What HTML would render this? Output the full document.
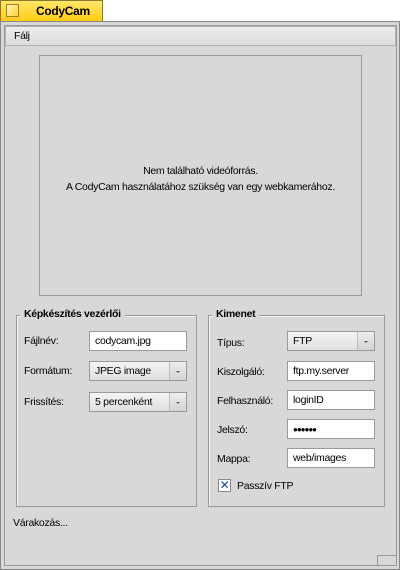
<!DOCTYPE html>
<html><head><style>
*{box-sizing:border-box}
body{margin:0;width:400px;height:570px;background:#fff;position:relative;overflow:hidden;font-family:"Liberation Sans","DejaVu Sans",sans-serif;font-size:10.5px;letter-spacing:-0.3px;color:#000}
.a{position:absolute}
.tab{left:0;top:0;width:103px;height:22px;background:linear-gradient(#ffe66a,#ffcb10);border:1px solid #8a7a30;border-bottom:none}
.win{left:0;top:21px;width:400px;height:549px;background:#d8d8d8;border:1px solid #888}
.field{background:#fff;border:1px solid #999;height:20px;padding:3px 0 0 5px}
.menu{background:linear-gradient(#ececec,#dcdcdc);border:1px solid #b0b0b0;height:20px;padding:3px 0 0 8px}
.dd{background:linear-gradient(#f4f4f4,#e0e0e0);border:1px solid #999;height:20px;padding:3px 0 0 5px}
.dd::after{content:"";position:absolute;right:0;top:0;width:16px;height:18px;border-left:1px solid #bbb;background:linear-gradient(#eee,#d4d4d4)}
.dd i{position:absolute;right:6px;top:9px;width:0;height:0;border-left:2px solid transparent;border-right:2px solid transparent;border-top:2px solid #555;z-index:2}
.box{border:1px solid #999;box-shadow:1px 1px 0 #f4f4f4 inset}
.bt{background:#d8d8d8;font-weight:bold;padding:0 4px}
</style></head><body>
<div class="a tab"></div>
<div class="a" style="left:6px;top:4px;width:13px;height:13px;border:1px solid #9a8020;background:linear-gradient(135deg,#fff6c0,#ffd030)"></div>
<div class="a" style="left:36px;top:4px;font-weight:bold;font-size:12px">CodyCam</div>
<div class="a win"></div>
<div class="a" style="left:4px;top:25px;width:393px;height:541px;border:1px solid #999;background:#d8d8d8"></div>
<div class="a menu" style="left:5px;top:26px;width:391px">Fálj</div>
<div class="a" style="left:39px;top:55px;width:323px;height:241px;border:1px solid #999"></div>
<div class="a" style="left:39px;top:163px;width:323px;text-align:center;line-height:16px">Nem található videóforrás.<br>A CodyCam használatához szükség van egy webkamerához.</div>

<div class="a box" style="left:16px;top:315px;width:181px;height:192px"></div>
<div class="a bt" style="left:20px;top:308px">Képkészítés vezérlői</div>
<div class="a" style="left:24px;top:335px">Fájlnév:</div>
<div class="a field" style="left:89px;top:331px;width:98px">codycam.jpg</div>
<div class="a" style="left:24px;top:365px">Formátum:</div>
<div class="a dd" style="left:89px;top:361px;width:98px">JPEG image<i></i></div>
<div class="a" style="left:24px;top:396px">Frissítés:</div>
<div class="a dd" style="left:89px;top:392px;width:98px">5 percenként<i></i></div>

<div class="a box" style="left:208px;top:315px;width:177px;height:192px"></div>
<div class="a bt" style="left:212px;top:308px">Kimenet</div>
<div class="a" style="left:217px;top:337px">Típus:</div>
<div class="a dd" style="left:287px;top:331px;width:88px">FTP<i></i></div>
<div class="a" style="left:217px;top:366px">Kiszolgáló:</div>
<div class="a field" style="left:287px;top:361px;width:88px">ftp.my.server</div>
<div class="a" style="left:217px;top:395px">Felhasználó:</div>
<div class="a field" style="left:287px;top:390px;width:88px">loginID</div>
<div class="a" style="left:217px;top:424px">Jelszó:</div>
<div class="a field" style="left:287px;top:419px;width:88px;font-size:8px;padding-top:5px;letter-spacing:-1px">●●●●●●</div>
<div class="a" style="left:217px;top:453px">Mappa:</div>
<div class="a field" style="left:287px;top:448px;width:88px">web/images</div>
<div class="a" style="left:218px;top:479px;width:13px;height:13px;border:1px solid #888;background:#fff;color:#1a4a9a;font-weight:bold;font-size:12px;line-height:11px;text-align:center">✕</div>
<div class="a" style="left:237px;top:480px">Passzív FTP</div>

<div class="a" style="left:13px;top:517px">Várakozás...</div>
<div class="a" style="left:377px;top:555px;width:20px;height:11px;border-left:1px solid #999;border-top:1px solid #999"></div>
</body></html>
